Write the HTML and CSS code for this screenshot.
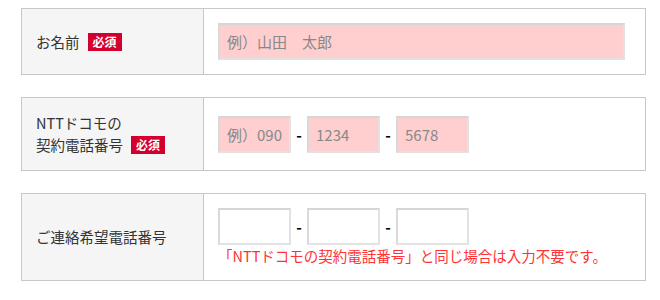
FILE: index.html
```html
<!DOCTYPE html>
<html lang="ja">
<head>
<meta charset="utf-8">
<link rel="stylesheet" href="styles.css">
</head>
<body>
<div class="form">
  <div class="row">
    <div class="label"><span>お名前<span class="req">必須</span></span></div>
    <div class="field">
      <input class="inp inp-name req-bg" type="text" placeholder="例）山田　太郎">
    </div>
  </div>
  <div class="row">
    <div class="label"><span>NTTドコモの<br>契約電話番号<span class="req">必須</span></span></div>
    <div class="field">
      <div class="tel">
        <input class="inp inp-tel req-bg" type="text" placeholder="例）090">
        <span class="dash">-</span>
        <input class="inp inp-tel req-bg" type="text" placeholder="1234">
        <span class="dash">-</span>
        <input class="inp inp-tel req-bg" type="text" placeholder="5678">
      </div>
    </div>
  </div>
  <div class="row">
    <div class="label"><span>ご連絡希望電話番号</span></div>
    <div class="field">
      <div class="tel">
        <input class="inp inp-tel" type="text">
        <span class="dash">-</span>
        <input class="inp inp-tel" type="text">
        <span class="dash">-</span>
        <input class="inp inp-tel" type="text">
      </div>
      <p class="note">「NTTドコモの契約電話番号」と同じ場合は入力不要です。</p>
    </div>
  </div>
</div>
</body>
</html>
```
FILE: styles.css
```css
html, body {
  margin: 0;
  padding: 0;
  background: #fff;
}
body {
  font-family: "Noto Sans CJK JP", "Noto Sans", sans-serif;
  color: #333;
  font-size: 14.5px;
}
.form {
  padding: 8px 0 0 21px;
}
.row {
  display: grid;
  grid-template-columns: 182px 1fr;
  width: 625px;
  box-sizing: border-box;
  border: 1px solid #c8c8c8;
  margin-bottom: 22px;
}
.label {
  background: #f5f5f5;
  border-right: 1px solid #c8c8c8;
  padding: 14px 14px;
  display: flex;
  align-items: center;
  line-height: 22px;
}
.req {
  display: inline-block;
  vertical-align: 1px;
  margin-left: 8px;
  width: 34px;
  height: 18px;
  line-height: 18px;
  text-align: center;
  background: #d3002e;
  color: #fff;
  font-size: 12px;
  font-weight: bold;
}
.field {
  padding: 14px 19px 14px 14px;
  display: flex;
  flex-direction: column;
  justify-content: center;
}
.inp {
  box-sizing: border-box;
  height: 37px;
  margin: 0;
  padding: 0 7px;
  border: 2px solid #e2e2e2;
  border-top-color: #d6d6d6;
  border-left-color: #d9d9d9;
  background: #fff;
  font-family: inherit;
  font-size: 15px;
  color: #333;
  outline: none;
}
.inp::placeholder {
  color: #888;
}
.req-bg {
  background: #ffcfcf;
}
.inp-name {
  width: 407px;
}
.tel {
  display: flex;
  align-items: center;
}
.inp-tel {
  width: 73px;
}
.dash {
  width: 16px;
  text-align: center;
  color: #000;
  font-size: 15px;
  font-weight: bold;
}
.note {
  margin: 0;
  color: #f33;
  line-height: 21px;
  font-size: 14.5px;
}
```
